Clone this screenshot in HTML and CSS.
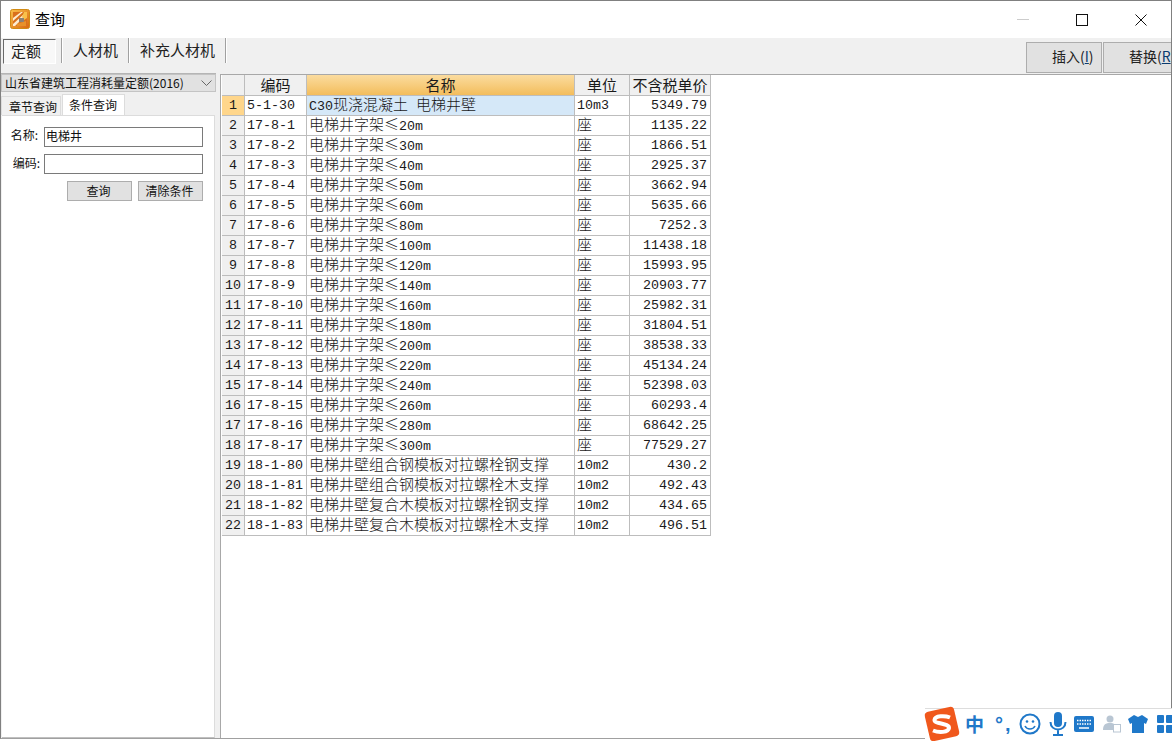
FILE: index.html
```html
<!DOCTYPE html>
<html lang="zh-CN">
<head>
<meta charset="utf-8"/>
<title>查询</title>
<link rel="stylesheet" href="styles.css">
</head>
<body>
<div class="win">
	<header class="titlebar">
		<svg class="appicon" width="20" height="20" viewBox="0 0 20 20">
			<defs><linearGradient id="ag" x1="0" y1="0" x2="1" y2="1"><stop offset="0" stop-color="#f9c04a"/><stop offset="1" stop-color="#d9650f"/></linearGradient></defs>
			<rect x=".5" y=".5" width="19" height="19" rx="2" fill="url(#ag)" stroke="#d08a14"/>
			<rect x="3" y="3" width="14" height="14" fill="#d9701c"/>
			<path d="M3 9L11 3h2L3 12zM3 15L14 5l2 1L5 17H3z" fill="#fdeccf"/>
			<path d="M14 3h3v6l-3 2-2-3z" fill="#f9c04a"/>
			<rect x="9" y="9" width="5" height="4" fill="#8a8178"/>
			<path d="M7 15l9-3v5H7z" fill="#e8912a"/>
		</svg>
		<span class="title">查询</span>
		<div class="winbtns">
			<span class="wmin"></span>
			<span class="wmax"></span>
			<svg class="wclose" width="12" height="12" viewBox="0 0 12 12"><path d="M.5.5l11 11M11.500.5l-11 11" stroke="#111" fill="none"/></svg>
		</div>
	</header>

	<nav class="toolbar">
		<button class="tab tab-on">定额</button>
		<span class="sep first"></span>
		<button class="tab t2">人材机</button>
		<span class="sep"></span>
		<button class="tab t3">补充人材机</button>
		<span class="sep"></span>
		<div class="actions">
			<button class="act">插入(<u>I</u>)</button>
			<button class="act">替换(<u>R</u>)</button>
		</div>
	</nav>

	<div class="body">
		<aside class="side">
			<div class="combo">
				<span>山东省建筑工程消耗量定额(2016)</span>
				<svg width="11" height="6" viewBox="0 0 11 6"><path d="M.5.5l5 5 5-5" stroke="#666" fill="none"/></svg>
			</div>
			<div class="sidetabs">
				<span class="stab">章节查询</span>
				<span class="stab stab-on">条件查询</span>
			</div>
			<form class="query">
				<div class="field">
					<label class="lab-name" for="q_name">名称:</label>
					<input id="q_name" type="text" value="电梯井">
				</div>
				<div class="field">
					<label for="q_code">编码:</label>
					<input id="q_code" type="text">
				</div>
				<div class="qbtns">
					<button type="button" class="qbtn">查询</button>
					<button type="button" class="qbtn">清除条件</button>
				</div>
			</form>
		</aside>

		<main class="gridwrap">
			<table class="grid">
				<colgroup><col class="c0"><col class="c1"><col class="c2"><col class="c3"><col class="c4"></colgroup>
				<tr><th></th><th>编码</th><th class="sort">名称</th><th>单位</th><th>不含税单价</th></tr>
				<tr class="cur"><th>1</th><td>5-1-30</td><td class="sel">C30<span class="c">现浇混凝土</span><span class="c gap">电梯井壁</span></td><td>10m3</td><td class="n">5349.79</td></tr>
				<tr><th>2</th><td>17-8-1</td><td><span class="c">电梯井字架≤</span>20m</td><td><span class="c">座</span></td><td class="n">1135.22</td></tr>
				<tr><th>3</th><td>17-8-2</td><td><span class="c">电梯井字架≤</span>30m</td><td><span class="c">座</span></td><td class="n">1866.51</td></tr>
				<tr><th>4</th><td>17-8-3</td><td><span class="c">电梯井字架≤</span>40m</td><td><span class="c">座</span></td><td class="n">2925.37</td></tr>
				<tr><th>5</th><td>17-8-4</td><td><span class="c">电梯井字架≤</span>50m</td><td><span class="c">座</span></td><td class="n">3662.94</td></tr>
				<tr><th>6</th><td>17-8-5</td><td><span class="c">电梯井字架≤</span>60m</td><td><span class="c">座</span></td><td class="n">5635.66</td></tr>
				<tr><th>7</th><td>17-8-6</td><td><span class="c">电梯井字架≤</span>80m</td><td><span class="c">座</span></td><td class="n">7252.3</td></tr>
				<tr><th>8</th><td>17-8-7</td><td><span class="c">电梯井字架≤</span>100m</td><td><span class="c">座</span></td><td class="n">11438.18</td></tr>
				<tr><th>9</th><td>17-8-8</td><td><span class="c">电梯井字架≤</span>120m</td><td><span class="c">座</span></td><td class="n">15993.95</td></tr>
				<tr><th>10</th><td>17-8-9</td><td><span class="c">电梯井字架≤</span>140m</td><td><span class="c">座</span></td><td class="n">20903.77</td></tr>
				<tr><th>11</th><td>17-8-10</td><td><span class="c">电梯井字架≤</span>160m</td><td><span class="c">座</span></td><td class="n">25982.31</td></tr>
				<tr><th>12</th><td>17-8-11</td><td><span class="c">电梯井字架≤</span>180m</td><td><span class="c">座</span></td><td class="n">31804.51</td></tr>
				<tr><th>13</th><td>17-8-12</td><td><span class="c">电梯井字架≤</span>200m</td><td><span class="c">座</span></td><td class="n">38538.33</td></tr>
				<tr><th>14</th><td>17-8-13</td><td><span class="c">电梯井字架≤</span>220m</td><td><span class="c">座</span></td><td class="n">45134.24</td></tr>
				<tr><th>15</th><td>17-8-14</td><td><span class="c">电梯井字架≤</span>240m</td><td><span class="c">座</span></td><td class="n">52398.03</td></tr>
				<tr><th>16</th><td>17-8-15</td><td><span class="c">电梯井字架≤</span>260m</td><td><span class="c">座</span></td><td class="n">60293.4</td></tr>
				<tr><th>17</th><td>17-8-16</td><td><span class="c">电梯井字架≤</span>280m</td><td><span class="c">座</span></td><td class="n">68642.25</td></tr>
				<tr><th>18</th><td>17-8-17</td><td><span class="c">电梯井字架≤</span>300m</td><td><span class="c">座</span></td><td class="n">77529.27</td></tr>
				<tr><th>19</th><td>18-1-80</td><td><span class="c">电梯井壁组合钢模板对拉螺栓钢支撑</span></td><td>10m2</td><td class="n">430.2</td></tr>
				<tr><th>20</th><td>18-1-81</td><td><span class="c">电梯井壁组合钢模板对拉螺栓木支撑</span></td><td>10m2</td><td class="n">492.43</td></tr>
				<tr><th>21</th><td>18-1-82</td><td><span class="c">电梯井壁复合木模板对拉螺栓钢支撑</span></td><td>10m2</td><td class="n">434.65</td></tr>
				<tr><th>22</th><td>18-1-83</td><td><span class="c">电梯井壁复合木模板对拉螺栓木支撑</span></td><td>10m2</td><td class="n">496.51</td></tr>
			</table>
		</main>
	</div>
</div>

<!-- input method bar floats over the window -->
<div class="ime">
	<svg class="ime-logo" width="38" height="38" viewBox="0 0 38 38">
		<rect x="4" y="4" width="30" height="30" rx="4" fill="#f0581c" transform="rotate(-13 19 19)"/>
		<path d="M27 12.500C22 10.500 12 10.500 11.500 15c-.4 4 15 3 14.500 8-.5 4.500-10 5-16 2.500" stroke="#fff" stroke-width="4" fill="none"/>
	</svg>
	<span class="ime-zh">中</span>
	<span class="ime-dot">°,</span>
	<svg class="ime-ico i-smile" width="22" height="22" viewBox="0 0 22 22"><circle cx="11" cy="11" r="9.500" fill="none" stroke="#1f78c9" stroke-width="2"/><circle cx="8" cy="8.500" r="1.300" fill="#1f78c9"/><circle cx="14" cy="8.500" r="1.300" fill="#1f78c9"/><path d="M6 13c2 4 8 4 10 0" fill="none" stroke="#1f78c9" stroke-width="1.600"/></svg>
	<svg class="ime-ico i-mic" width="18" height="24" viewBox="0 0 18 24"><rect x="5" y="0" width="8" height="15" rx="4" fill="#1f78c9"/><path d="M1.500 10c0 10 15 10 15 0M9 18v4M4 23h10" fill="none" stroke="#1f78c9" stroke-width="2"/></svg>
	<svg class="ime-ico i-keys" width="20" height="16" viewBox="0 0 20 16"><rect width="20" height="16" rx="2" fill="#1f78c9"/><path d="M3 4.500h14M3 8h14" stroke="#fff" stroke-width="1.500" stroke-dasharray="1.500 1"/><path d="M5 12h10" stroke="#fff" stroke-width="1.500"/></svg>
	<svg class="ime-ico i-user" width="18" height="18" viewBox="0 0 18 18"><circle cx="7" cy="4" r="3.500" fill="#b9c6d3"/><path d="M0 15c0-6 3-7 7-7 2 0 4 .5 4 1v6z" fill="#b9c6d3"/><rect x="10.500" y="9.500" width="7" height="7.500" fill="#fff" stroke="#b9c6d3"/></svg>
	<svg class="ime-ico i-shirt" width="20" height="18" viewBox="0 0 20 18"><path d="M6 0l4 2 4-2 6 4-2 5-2-1v10H4V8L2 9 0 4z" fill="#1f78c9"/></svg>
	<svg class="ime-ico i-apps" width="16" height="18" viewBox="0 0 16 18"><rect width="7" height="8" rx="1" fill="#1f78c9"/><rect x="9" width="7" height="8" rx="1" fill="#1f78c9"/><rect y="10" width="7" height="8" rx="1" fill="#1f78c9"/><rect x="9" y="10" width="7" height="8" rx="1" fill="#1f78c9"/></svg>
</div>
</body>
</html>
```

FILE: styles.css
```css
html, body {
	margin:0;
	height:100%;
	overflow:hidden;
	background:#fff;
}
body {
	font:400 12px/1.2 "Noto Sans CJK SC", sans-serif;
	color:#111;
}
button, input {
	font:inherit;
	color:inherit;
	margin:0;
}
.win {
	box-sizing:border-box;
	height:739px;
	display:flex;
	flex-direction:column;
	border:1px solid #808080;
	border-bottom-color:#a0a0a0;
	overflow:hidden;
	background:#f0f0f0;
}

/* title bar */
.titlebar {
	flex:none;
	height:37px;
	display:flex;
	align-items:center;
	background:#fff;
	padding-left:9px;
}
.appicon {
	margin-top:-1px;
}
.title {
	margin:-2px 0 0 5px;
	font-size:15px;
	color:#000;
}
.winbtns {
	margin-left:auto;
	display:flex;
	align-items:center;
}
.wmin {
	width:12px;
	height:1px;
	background:#ccc;
}
.wmax {
	box-sizing:border-box;
	width:12px;
	height:12px;
	border:1px solid #111;
	margin:0 47px;
}
.wclose {
	margin-right:24px;
}

/* toolbar */
.toolbar {
	flex:none;
	height:35px;
	display:flex;
	align-items:flex-start;
	overflow:hidden;
}
.tab {
	border:0;
	background:none;
	padding:0 0 2px;
	font-size:15px;
	height:25px;
	color:#222;
}
.tab-on {
	box-sizing:border-box;
	width:53px;
	margin:1px 0 0 2px;
	padding:0 7px 2px 0;
	border:1px solid #fff;
	border-top-color:#696969;
	border-left-color:#696969;
	background:#f8f8f8;
}
.t2 {
	margin:0 10px 0 11px;
	width:45px;
}
.t3 {
	margin:0 10px 0 11px;
	width:75px;
}
.sep {
	width:1px;
	height:25px;
	background:#a0a0a0;
	box-shadow:1px 0 0 #fff;
}
.sep.first {
	margin-left:5px;
}
.actions {
	margin-left:auto;
	width:145px;
	display:flex;
	gap:1px;
	overflow:hidden;
	padding-top:4px;
}
.act {
	flex:none;
	box-sizing:border-box;
	width:76px;
	height:31px;
	border:1px solid #adadad;
	background:#e1e1e1;
	font-size:14px;
	padding:0 0 2px 25px;
	text-align:left;
	white-space:nowrap;
	overflow:hidden;
	color:#222;
}
.act u {
	color:#0a3a6e;
}

/* left panel */
.body {
	flex:1;
	display:flex;
	min-height:0;
}
.side {
	flex:none;
	width:215px;
	margin-right:4px;
	display:flex;
	flex-direction:column;
	border-top:1px solid #b5b5b5;
}
.combo {
	box-sizing:border-box;
	height:18px;
	display:flex;
	align-items:center;
	justify-content:space-between;
	padding:0 3px 0 3px;
	background:#e1e1e1;
	border:1px solid #c4c4c4;
	white-space:nowrap;
}
.sidetabs {
	margin-top:2px;
	height:21px;
	display:flex;
	align-items:flex-end;
}
.stab {
	box-sizing:border-box;
	width:60px;
	height:19px;
	padding-left:7px;
	line-height:19px;
	background:#f0f0f0;
	border:1px solid #dcdcdc;
	border-bottom:0;
}
.stab-on {
	width:63px;
	height:21px;
	padding-left:6px;
	line-height:19px;
	background:#fff;
	margin-left:1px;
}
.query {
	flex:1;
	margin:0 1px;
	background:#fff;
	border:1px solid #dcdcdc;
	border-left:0;
	border-bottom-color:#c0c0c0;
	padding:11px 11px 0 0;
}
.field {
	display:flex;
	align-items:center;
	justify-content:flex-end;
	margin-bottom:7px;
}
.field label {
	margin:-2px 4px 0 0;
}
.field .lab-name {
	margin:-4px 6px 0 0;
}
.field input {
	box-sizing:border-box;
	width:159px;
	height:20px;
	padding:0 1px 3px;
	border:1px solid #7a7a7a;
	border-radius:0;
	background:#fff;
	outline:none;
}
.qbtns {
	display:flex;
	justify-content:flex-end;
	gap:6px;
}
.qbtn {
	box-sizing:border-box;
	width:65px;
	height:20px;
	padding:0 2px 0 0;
	border:1px solid #adadad;
	background:#e1e1e1;
}

/* result grid */
.gridwrap {
	flex:1;
	margin-top:1px;
	background:#fff;
	border-left:1px solid #a8a8a8;
	border-top:1px solid #a8a8a8;
	padding-left:1px;
}
.grid {
	table-layout:fixed;
	width:489px;
	border-collapse:separate;
	border-spacing:0;
	font:400 13.33px/17px "Liberation Mono", "Noto Sans CJK SC", monospace;
	color:#1a1a1a;
}
.c0 { width:23px; }
.c1 { width:62px; }
.c2 { width:268px; }
.c3 { width:55px; }
.c4 { width:81px; }
.grid th, .grid td {
	box-sizing:border-box;
	height:20px;
	padding:0 2px;
	border-right:1px solid #bdbdbd;
	border-bottom:1px solid #bdbdbd;
	white-space:nowrap;
}
.grid th {
	font-weight:400;
	text-align:center;
	background:#f0f0f0;
	padding:0;
}
.grid tr:first-child th {
	height:21px;
	font:400 15px/18px "Noto Sans CJK SC", sans-serif;
}
.grid .sort {
	background:linear-gradient(#fbdc9f, #f3bd5c);
}
.cur th {
	background:#ffd68b;
}
.grid .sel {
	background:#d5e8f8;
}
.grid .n {
	text-align:right;
	padding-right:3px;
}
.c {
	font:300 15px/13px "Noto Sans CJK SC", sans-serif;
}
.gap {
	margin-left:8px;
}

/* input method bar */
.ime {
	position:absolute;
	left:925px;
	top:704px;
	width:247px;
	height:36px;
	display:flex;
	align-items:center;
	padding-top:4px;
	box-sizing:border-box;
	background:linear-gradient(transparent 4px, #ddd 4px, #ddd 5px, #fff 5px);
}
.ime-logo {
	flex:none;
	margin:0 0 0 -2px;
}
.ime-zh {
	margin-left:4px;
	font:700 19px/24px "Noto Sans CJK SC", sans-serif;
	color:#1f78c9;
}
.ime-dot {
	margin-left:11px;
	font:700 20px/24px "Liberation Sans", sans-serif;
	letter-spacing:2px;
	color:#1f78c9;
}
.ime-ico {
	flex:none;
}
.i-smile {
	margin-left:6px;
}
.i-mic {
	margin-left:8px;
}
.i-keys {
	margin-left:7px;
}
.i-user {
	margin-left:9px;
}
.i-shirt {
	margin-left:7px;
}
.i-apps {
	margin-left:9px;
}
```
